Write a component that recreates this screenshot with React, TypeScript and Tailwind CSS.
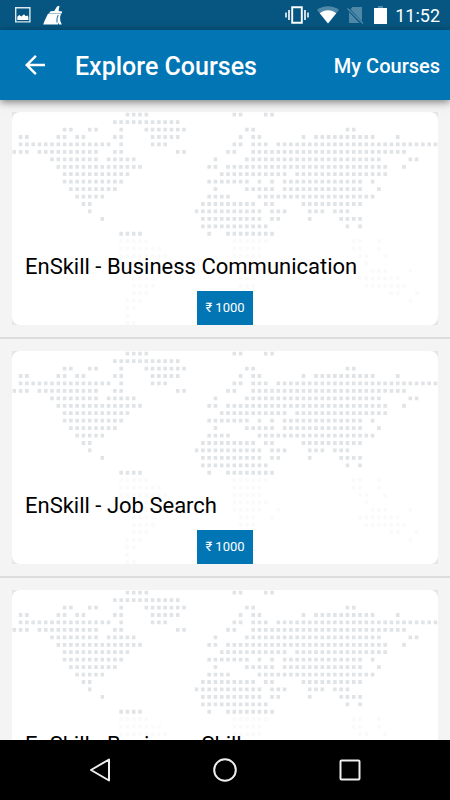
import { MdArrowBack } from "react-icons/md";

type Run = [row: number, from: number, to: number];

const MAP: Run[] = [
  [0, 18, 21], [0, 35, 36], [0, 40, 41],
  [1, 16, 26],
  [2, 8, 9], [2, 12, 13], [2, 17, 17], [2, 21, 27], [2, 37, 38], [2, 53, 54],
  [3, 1, 2], [3, 7, 8], [3, 10, 11], [3, 16, 17], [3, 22, 26], [3, 36, 36], [3, 38, 39], [3, 46, 46], [3, 48, 57], [3, 61, 61],
  [4, 1, 15], [4, 17, 17], [4, 22, 24], [4, 35, 36], [4, 38, 40], [4, 42, 67],
  [5, 0, 2], [5, 4, 13], [5, 16, 17], [5, 26, 27], [5, 34, 35], [5, 38, 62],
  [6, 6, 13], [6, 15, 19], [6, 32, 32], [6, 37, 58], [6, 63, 64],
  [7, 7, 20], [7, 31, 32], [7, 34, 59], [7, 62, 62],
  [8, 8, 18], [8, 33, 43], [8, 45, 59],
  [9, 8, 17], [9, 31, 37], [9, 39, 39], [9, 41, 41], [9, 43, 55], [9, 57, 57],
  [10, 9, 16], [10, 32, 32], [10, 37, 41], [10, 43, 55], [10, 58, 58],
  [11, 10, 14], [11, 31, 34], [11, 39, 57],
  [12, 11, 12], [12, 30, 38], [12, 40, 41], [12, 46, 55],
  [13, 12, 12], [13, 29, 39], [13, 41, 43], [13, 47, 49], [13, 51, 53],
  [14, 14, 14], [14, 30, 39], [14, 41, 42], [14, 47, 47], [14, 52, 55],
  [15, 30, 40], [15, 53, 53], [15, 55, 55],
  [16, 17, 20], [16, 31, 31], [16, 34, 41],
];

const FADED: Run[] = [
  [17, 17, 21], [17, 35, 40], [17, 54, 55], [17, 58, 58],
  [18, 17, 23], [18, 35, 39], [18, 54, 55], [18, 58, 58],
  [19, 17, 24], [19, 35, 39], [19, 55, 56], [19, 59, 59],
  [20, 17, 24], [20, 35, 40], [20, 56, 56],
  [21, 18, 23], [21, 35, 39], [21, 42, 42], [21, 57, 59], [21, 63, 63],
  [22, 19, 22], [22, 36, 38], [22, 41, 41], [22, 55, 61],
  [23, 19, 22], [23, 36, 38], [23, 56, 62],
  [24, 19, 21], [24, 60, 61], [24, 64, 64],
  [25, 18, 20], [25, 63, 63],
  [26, 18, 19],
  [27, 18, 18],
  [28, 18, 19],
];

const courses = [
  { title: "EnSkill - Business Communication", price: "₹ 1000" },
  { title: "EnSkill - Job Search", price: "₹ 1000" },
  { title: "EnSkill - Business Skill", price: "₹ 1000" },
];

function dots(runs: Run[]) {
  return runs
    .map(([row, from, to]) => {
      let d = "";
      for (let col = from; col <= to; col++) {
        d += `M${(0.5 + col * 6.286).toFixed(2)} ${(0.8 + row * 7.44).toFixed(2)}h3.6v3.8h-3.6z`;
      }
      return d;
    })
    .join("");
}

const mapPath = dots(MAP);
const fadedPath = dots(FADED);

function WorldMap() {
  return (
    <svg className="absolute inset-0 w-full h-full" viewBox="0 0 426 213" preserveAspectRatio="none" aria-hidden="true">
      <path d={mapPath} fill="#e0e4e7" />
      <path d={fadedPath} fill="#fafafa" />
    </svg>
  );
}

function StatusBar() {
  return (
    <div className="h-[30px] shrink-0 bg-[#065681] flex items-center justify-between pl-[15px] pr-[10px] text-white">
      <div className="flex items-center gap-3">
        <svg width="16" height="16" viewBox="0 0 16 16">
          <path d="M.7 .7h14.2v14.2H.7z" fill="none" stroke="#dce8ef" strokeWidth="1.4" />
          <path d="M2.3 13V9.8L4.3 8l2 1.5L9 7.2l1.8 2 1.6-.7 1 1.5v3z" fill="#fff" />
        </svg>
        <svg width="20" height="20" viewBox="0 0 20 20" fill="#fff">
          <path d="M14 1.500 16.500.8 15.600 6l3.600.5-.5 2H5.800l1.800-2.200 3.600-.3z" />
          <path d="M5 8.800h13l-.9 3.200.2 4 1.500 3.600h-2.800l-.8-2-.2 2H.2l1.300-3.600z" />
          <path d="M15.200 10 14 13.500v4" fill="none" stroke="#065681" strokeWidth=".9" />
        </svg>
      </div>
      <div className="flex items-center gap-2">
        <svg width="24" height="18" viewBox="0 0 24 18" fill="none" stroke="#fff">
          <path d="M7.200 1.200h9.600v15.600H7.200z" strokeWidth="1.900" />
          <path d="M4 4v10M20 4v10" strokeWidth="1.600" />
          <path d="M1 6.500v5M23 6.500v5" strokeWidth="1.500" />
        </svg>
        <svg width="22" height="18" viewBox="0 0 22 18">
          <path d="M11 17.500 0 4C6-1 16-1 22 4z" fill="#5089a8" />
          <path d="M11 17.500 2.800 7.300C7.500 3.200 14.500 3.200 19.200 7.300z" fill="#fff" />
        </svg>
        <svg width="17" height="18" viewBox="0 0 17 18">
          <path d="M5.500 1h9.500v16H2V5z" fill="#5089a8" />
          <path d="M0 1.800 15.500 18" stroke="#065681" strokeWidth="3" />
          <path d="M.5 2.500 16 17.500" stroke="#5089a8" strokeWidth="1.400" />
        </svg>
        <div className="flex items-center pl-0.5 gap-2">
          <svg width="13" height="18" viewBox="0 0 13 18">
            <path d="M4 0h5v2H4z" fill="#5089a8" />
            <path d="M0 2h13v16H0z" fill="#fff" />
          </svg>
          <span className="pt-0.5 text-[18px] leading-5">11:52</span>
        </div>
      </div>
    </div>
  );
}

function Header() {
  return (
    <header className="relative z-10 h-[70px] shrink-0 bg-[#0275b5] flex items-center px-[10px] text-white shadow-[0_2px_8px_rgba(0,0,0,0.5)]">
      <button aria-label="Back" className="w-[50px] h-12 flex items-center justify-center">
        <MdArrowBack size={30} />
      </button>
      <h1 className="ml-[15px] pt-1 text-[25px] leading-8 font-medium">Explore Courses</h1>
      <a href="#my-courses" className="ml-auto pt-0.5 text-[20px] leading-8 font-medium">
        My Courses
      </a>
    </header>
  );
}

function CourseCard({ title, price }: { title: string; price: string }) {
  return (
    <li className="shrink-0 px-3 py-3 border-b-2 border-[#dddddd]">
      <div className="relative h-[213px] bg-[#e6e6e6]">
        <div className="relative h-full rounded-lg bg-white overflow-hidden flex flex-col justify-end">
          <WorldMap />
          <h2 className="relative px-[13px] text-[22px] leading-8 text-black">{title}</h2>
          <button className="relative mt-2 mx-auto w-14 h-[34px] bg-[#0275b5] text-white text-[13px] leading-4">
            {price}
          </button>
        </div>
      </div>
    </li>
  );
}

function NavBar() {
  return (
    <nav className="relative z-10 h-[60px] shrink-0 bg-black flex items-center justify-center gap-[101px] text-[#eeeeee]">
      <button aria-label="Back">
        <svg width="24" height="24" viewBox="0 0 24 24" fill="none" stroke="currentColor" strokeWidth="2" strokeLinejoin="round">
          <path d="M21 1.500v21L3 12z" />
        </svg>
      </button>
      <button aria-label="Home">
        <svg width="24" height="24" viewBox="0 0 24 24" fill="none" stroke="currentColor" strokeWidth="2">
          <circle cx="12" cy="12" r="10.800" />
        </svg>
      </button>
      <button aria-label="Recent apps">
        <svg width="24" height="24" viewBox="0 0 24 24" fill="none" stroke="currentColor" strokeWidth="2">
          <rect x="2.500" y="2.500" width="19" height="19" rx="1" />
        </svg>
      </button>
    </nav>
  );
}

export default function App() {
  return (
    <div className="h-screen flex flex-col bg-[#f4f4f4] overflow-hidden font-[Roboto,sans-serif]">
      <StatusBar />
      <Header />
      <main className="flex-1 min-h-0 overflow-y-auto [scrollbar-width:none]">
        <ul className="flex flex-col">
          {courses.map((course) => (
            <CourseCard key={course.title} {...course} />
          ))}
        </ul>
      </main>
      <NavBar />
    </div>
  );
}
